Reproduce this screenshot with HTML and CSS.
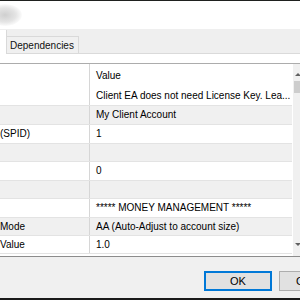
FILE: index.html
```html
<!DOCTYPE html>
<html lang="en">
<head>
  <meta charset="UTF-8">
  <title>Expert Properties</title>
  <link rel="stylesheet" href="styles.css">
</head>
<body>
<div class="edge-top"></div>
<div class="title-area"><div class="blob"></div></div>
<div class="tabs">
  <div class="tab-active"></div>
  <div class="tab">Dependencies</div>
</div>
<div class="panel">
  <div class="list">
    <div class="rows">
      <div class="row head"><div class="cell name"></div><div class="cell">Value</div></div>
      <div class="row h19"><div class="cell name"></div><div class="cell">Client EA does not need License Key. Lea...</div></div>
      <div class="row h19 alt"><div class="cell name"></div><div class="cell">My Client Account</div></div>
      <div class="row h19"><div class="cell name">(SPID)</div><div class="cell">1</div></div>
      <div class="row h18 alt"><div class="cell name"></div><div class="cell"></div></div>
      <div class="row h19"><div class="cell name"></div><div class="cell">0</div></div>
      <div class="row h18 alt"><div class="cell name"></div><div class="cell"></div></div>
      <div class="row h19"><div class="cell name"></div><div class="cell">***** MONEY MANAGEMENT *****</div></div>
      <div class="row h18 alt"><div class="cell name">Mode</div><div class="cell">AA (Auto-Adjust to account size)</div></div>
      <div class="row h18"><div class="cell name">Value</div><div class="cell">1.0</div></div>
    </div>
    <div class="scroll">
      <div class="arrow up"></div>
      <div class="thumb"></div>
      <div class="track"></div>
      <div class="arrow down"></div>
    </div>
  </div>
</div>
<div class="footer">
  <button class="btn btn-default">OK</button>
  <button class="btn">Cancel</button>
</div>
<div class="edge-bottom"></div>
</body>
</html>
```

FILE: styles.css
```css
body {
  margin: 0;
  width: 300px;
  height: 300px;
  overflow: hidden;
  font-family: "Liberation Sans", Arial, sans-serif;
  font-size: 10px;
  color: #000;
  background: #fff;
}
.edge-top {
  height: 1px;
  background: #1f211f;
}
.title-area {
  height: 28px;
  background: #fff;
  position: relative;
}
.blob {
  position: absolute;
  left: -12px;
  top: 3px;
  width: 34px;
  height: 22px;
  border-radius: 50%;
  background: radial-gradient(ellipse at center, #cfcfcf 0%, #e4e4e4 45%, rgba(255,255,255,0) 75%);
}
.tabs {
  height: 24px;
  background: #efefef;
  border-bottom: 1px solid #dadada;
  display: flex;
  align-items: flex-end;
}
.tab-active {
  width: 6px;
  height: 24px;
  background: #fff;
  border-right: 1px solid #d9d9d9;
  margin-bottom: -1px;
}
.tab {
  height: 16px;
  line-height: 17px;
  padding: 0 4px 0 3px;
  border: 1px solid #d9d9d9;
  border-bottom: none;
  border-left: none;
  background: #f0f0f0;
  color: #111;
}
.panel {
  background: #fff;
  padding-top: 9px;
}
.list {
  border-top: 1px solid #acacac;
  border-bottom: 1px solid #8c8c8c;
  height: 192px;
  display: flex;
}
.rows {
  width: 293px;
  border-right: 1px solid #fff;
}
.row {
  display: grid;
  grid-template-columns: 90px 1fr;
  border-bottom: 1px solid #e3e3e3;
  box-sizing: border-box;
}
.row.head {
  height: 23px;
  border-bottom: none;
}
.row.head .cell {
  line-height: 24px;
}
.h19 { height: 19px; }
.h18 { height: 18px; }
.alt { background: #f0f0f0; }
.cell {
  padding-left: 6px;
  line-height: 18px;
  white-space: nowrap;
  overflow: hidden;
}
.cell.name {
  padding-left: 0;
  border-right: 1px solid #d6d6d6;
}
.scroll {
  flex: 1;
  background: #f0f0f0;
  display: flex;
  flex-direction: column;
  align-items: center;
}
.arrow {
  height: 17px;
  width: 6px;
  position: relative;
}
.arrow.up::after,
.arrow.down::after {
  content: "";
  position: absolute;
  left: 1px;
  border-left: 3px solid transparent;
  border-right: 3px solid transparent;
}
.arrow.up::after {
  top: 9px;
  border-bottom: 3px solid #606060;
}
.arrow.down::after {
  top: 4px;
  border-top: 3px solid #606060;
}
.thumb {
  width: 6px;
  height: 12px;
  margin-left: 1px;
  background: #cdcdcd;
}
.track { flex: 1; }
.footer {
  height: 41px;
  background: #f0f0f0;
  display: flex;
  align-items: flex-start;
  padding: 14px 0 0 204px;
  box-sizing: border-box;
  gap: 7px;
}
.btn {
  height: 20px;
  width: 68px;
  flex-shrink: 0;
  padding: 0;
  font-family: "Liberation Sans", Arial, sans-serif;
  font-size: 11px;
  color: #000;
  background: #e1e1e1;
  border: 1px solid #adadad;
}
.btn-default {
  border: 1px solid #0078d7;
  box-shadow: inset 0 0 0 1px #0078d7;
}
.edge-bottom {
  height: 2px;
  background: #1a1a1a;
}
```
